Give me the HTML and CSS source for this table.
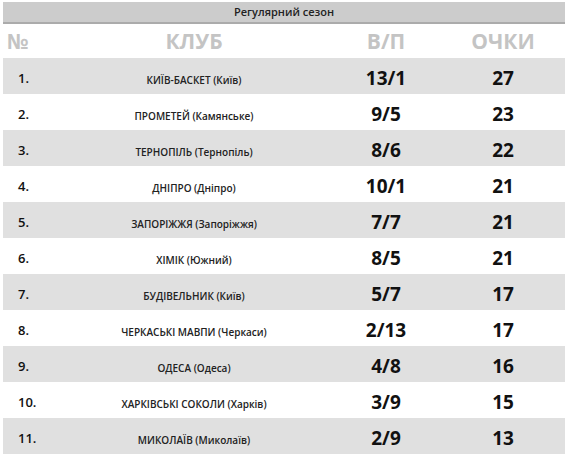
FILE: index.html
```html
<!DOCTYPE html>
<html lang="uk">
<head>
<meta charset="utf-8">
<title>Регулярний сезон</title>
<link rel="stylesheet" href="styles.css">
</head>
<body>
<table class="standings">
  <colgroup>
    <col class="c-num"><col class="c-club"><col class="c-wl"><col class="c-pts">
  </colgroup>
  <thead>
    <tr class="title-row"><th colspan="4">Регулярний сезон</th></tr>
    <tr class="head-row">
      <th class="h-num">№</th><th>КЛУБ</th><th>В/П</th><th>ОЧКИ</th>
    </tr>
  </thead>
  <tbody>
    <tr class="odd"><td class="num">1.</td><td class="club">КИЇВ-БАСКЕТ (Київ)</td><td class="big">13/1</td><td class="big">27</td></tr>
    <tr><td class="num">2.</td><td class="club">ПРОМЕТЕЙ (Камянське)</td><td class="big">9/5</td><td class="big">23</td></tr>
    <tr class="odd"><td class="num">3.</td><td class="club">ТЕРНОПІЛЬ (Тернопіль)</td><td class="big">8/6</td><td class="big">22</td></tr>
    <tr><td class="num">4.</td><td class="club">ДНІПРО (Дніпро)</td><td class="big">10/1</td><td class="big">21</td></tr>
    <tr class="odd"><td class="num">5.</td><td class="club">ЗАПОРІЖЖЯ (Запоріжжя)</td><td class="big">7/7</td><td class="big">21</td></tr>
    <tr><td class="num">6.</td><td class="club">ХІМІК (Южний)</td><td class="big">8/5</td><td class="big">21</td></tr>
    <tr class="odd"><td class="num">7.</td><td class="club">БУДІВЕЛЬНИК (Київ)</td><td class="big">5/7</td><td class="big">17</td></tr>
    <tr><td class="num">8.</td><td class="club">ЧЕРКАСЬКІ МАВПИ (Черкаси)</td><td class="big">2/13</td><td class="big">17</td></tr>
    <tr class="odd"><td class="num">9.</td><td class="club">ОДЕСА (Одеса)</td><td class="big">4/8</td><td class="big">16</td></tr>
    <tr><td class="num">10.</td><td class="club">ХАРКІВСЬКІ СОКОЛИ (Харків)</td><td class="big">3/9</td><td class="big">15</td></tr>
    <tr class="odd"><td class="num">11.</td><td class="club">МИКОЛАЇВ (Миколаїв)</td><td class="big">2/9</td><td class="big">13</td></tr>
  </tbody>
</table>
</body>
</html>
```
FILE: styles.css
```css
html, body {
  margin: 0;
  padding: 0;
  background: #ffffff;
}
body {
  padding: 2px 1px 0 3px;
  font-family: "Open Sans", "Liberation Sans", sans-serif;
  color: #222;
}
.standings {
  width: 562px;
  border-collapse: collapse;
  table-layout: fixed;
}
.c-num { width: 54px; }
.c-club { width: 274px; }
.c-wl { width: 110px; }
.c-pts { width: 124px; }

.standings th, .standings td {
  padding: 0;
  text-align: center;
  vertical-align: middle;
}
.title-row th {
  height: 20px;
  background: #cccccc;
  border-bottom: 2px solid #ababab;
  font-size: 11px;
  font-weight: 600;
  color: #222;
  line-height: 20px;
}
.head-row th {
  height: 34px;
  font-size: 21px;
  font-weight: 700;
  color: #c4c4c4;
  line-height: 34px;
}
.head-row .h-num {
  text-align: left;
  padding-left: 4px;
}
tbody tr {
  height: 36px;
}
tbody tr.odd {
  background: #e0e0e0;
}
.standings td.num {
  text-align: left;
  padding-left: 15px;
  padding-top: 4px;
  font-size: 13px;
  font-weight: 600;
  color: #111;
}
.standings td.club {
  font-size: 10px;
  font-weight: 600;
  color: #222;
  padding-top: 8px;
}
.standings td.big {
  font-size: 19px;
  font-weight: 700;
  color: #111;
  padding-top: 3px;
}
```
